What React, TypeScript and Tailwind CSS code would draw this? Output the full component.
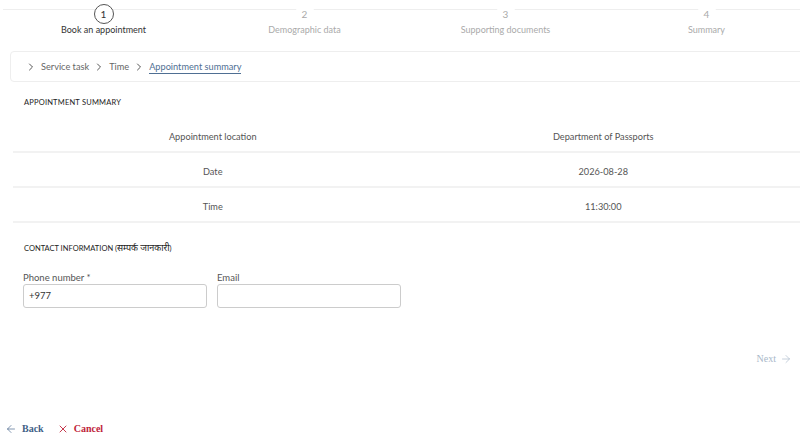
import { ChevronRight, ArrowLeft, ArrowRight, X } from "lucide-react";

const steps = [
  { n: 1, label: "Book an appointment", active: true },
  { n: 2, label: "Demographic data", active: false },
  { n: 3, label: "Supporting documents", active: false },
  { n: 4, label: "Summary", active: false },
];

const rows = [
  { k: "Appointment location", v: "Department of Passports" },
  { k: "Date", v: "2026-08-28" },
  { k: "Time", v: "11:30:00" },
];

export default function App() {
  return (
    <div
      className="w-[800px] h-[448px] overflow-hidden bg-white text-[#555] relative"
      style={{ fontFamily: "Lato, 'Noto Sans', sans-serif" }}
    >
      {/* stepper */}
      <div className="relative w-[804px] ml-[3px] h-[44px]">
        <div className="absolute left-0 right-0 top-[9px] h-px bg-[#eeeeee]" />
        <div className="relative grid grid-cols-4">
          {steps.map((s) => (
            <div key={s.n} className="flex flex-col items-center pt-[4px]">
              <div
                className={
                  s.active
                    ? "w-[20px] h-[20px] rounded-full border border-[#555] bg-white flex items-center justify-center text-[10px] text-[#333]"
                    : "w-[20px] h-[20px] rounded-full bg-white flex items-center justify-center text-[10px] text-[#aaa]"
                }
              >
                {s.n}
              </div>
              <div
                className={
                  s.active
                    ? "mt-[-1px] text-[9px] leading-[14px] text-[#333]"
                    : "mt-[-1px] text-[9px] leading-[14px] text-[#aaa]"
                }
              >
                {s.label}
              </div>
            </div>
          ))}
        </div>
      </div>

      {/* breadcrumb */}
      <div className="ml-[10px] mt-[7px] w-[800px] h-[31px] border border-[#eeeeee] rounded-[4px] flex items-center pl-[14px] gap-[4px] text-[9.2px] text-[#666]">
        <ChevronRight size={12} strokeWidth={1.8} className="text-[#444]" />
        <span>Service task</span>
        <ChevronRight size={12} strokeWidth={1.8} className="text-[#444]" />
        <span>Time</span>
        <ChevronRight size={12} strokeWidth={1.8} className="text-[#444]" />
        <span className="text-[#4f6f93] border-b border-[#4f6f93] leading-[12px] mt-[2px]">
          Appointment summary
        </span>
      </div>

      <div className="pl-[24px] mt-[16px] text-[7.5px] tracking-[0.2px] text-[#222] leading-[10px]">
        APPOINTMENT SUMMARY
      </div>

      {/* table */}
      <div className="ml-[13px] mt-[10px] w-[787px]">
        {rows.map((r) => (
          <div key={r.k} className="grid grid-cols-2 h-[35px] pt-[5px] border-b-2 border-[#f2f2f2] text-[9.2px] text-[#555] items-center">
            <div className="text-center pl-[6px]">{r.k}</div>
            <div className="text-center">{r.v}</div>
          </div>
        ))}
      </div>

      <div className="pl-[24px] mt-[20px] text-[7.5px] text-[#222] leading-[10px]">
        CONTACT INFORMATION (<span className="text-[9px]">सम्पर्क जानकारी</span>)
      </div>

      {/* inputs */}
      <div className="flex gap-[10px] pl-[23px] mt-[18px]">
        <div className="flex flex-col">
          <label className="text-[9.5px] text-[#555] leading-[12px]">Phone number *</label>
          <div className="w-[184px] h-[24px] border border-[#ccc] rounded-[3px] flex items-center pl-[5px] text-[9.5px] text-[#333]">
            +977
          </div>
        </div>
        <div className="flex flex-col">
          <label className="text-[9.5px] text-[#555] leading-[12px]">Email</label>
          <div className="w-[184px] h-[24px] border border-[#ccc] rounded-[3px]" />
        </div>
      </div>

      {/* next */}
      <div className="flex justify-end pr-[8px] mt-[43px]">
        <div
          className="flex items-center gap-[4px] text-[10px] text-[#a9b8c9]"
          style={{ fontFamily: "'Liberation Serif', serif" }}
        >
          Next
          <ArrowRight size={12} strokeWidth={1.3} />
        </div>
      </div>

      {/* back / cancel */}
      <div
        className="flex items-center gap-[13px] pl-[5px] mt-[55px] text-[10px] font-bold"
        style={{ fontFamily: "'Liberation Serif', serif" }}
      >
        <div className="flex items-center gap-[5px] text-[#3f5f86]">
          <ArrowLeft size={12} strokeWidth={1.3} />
          Back
        </div>
        <div className="flex items-center gap-[5px] text-[#c0243a]">
          <X size={12} strokeWidth={1.8} />
          Cancel
        </div>
      </div>
    </div>
  );
}
